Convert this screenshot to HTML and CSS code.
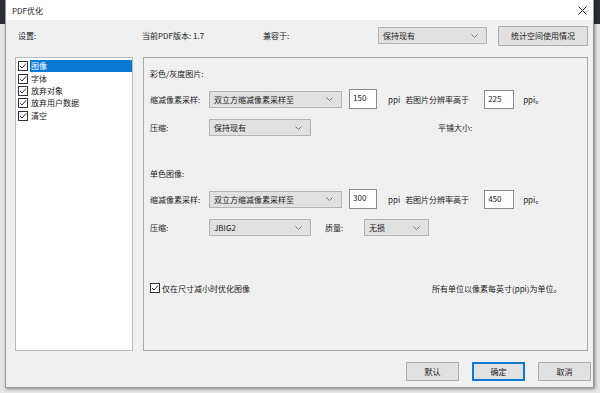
FILE: index.html
```html
<!DOCTYPE html>
<html lang="zh-CN">
<head>
  <meta charset="UTF-8">
  <meta name="viewport" content="width=device-width, initial-scale=1.0">
  <title>PDF优化</title>
  <link rel="stylesheet" href="styles.css">
</head>
<body>

  <div class="dialog">
    <div class="titlebar">
      <span class="title">PDF优化</span>
      <svg class="close" width="9" height="9" viewBox="0 0 9 9"><path d="M0.5 0.5 L8.5 8.5 M8.5 0.5 L0.5 8.5" stroke="#222" stroke-width="1" fill="none"/></svg>
    </div>

    <div class="content">
      <div class="header">
        <span class="h-settings">设置:</span>
        <span class="h-version">当前PDF版本: 1.7</span>
        <span class="h-compat">兼容于:</span>
        <div class="select sel-compat"><span>保持现有</span><svg class="chev" width="7" height="4" viewBox="0 0 7 4"><path d="M0.5 0.5 L3.5 3.5 L6.5 0.5" stroke="#777" fill="none"/></svg></div>
        <button class="btn btn-stats">统计空间使用情况</button>
      </div>

      <div class="main">
        <ul class="list">
          <li class="item selected"><span class="check"><svg width="10" height="10" viewBox="0 0 10 10"><rect x="0.5" y="0.5" width="9" height="9" fill="#fff" stroke="#333"/><path d="M2 5 L4 7 L8 2.5" stroke="#333" fill="none"/></svg></span><span class="label">图像</span></li>
          <li class="item"><span class="check"><svg width="10" height="10" viewBox="0 0 10 10"><rect x="0.5" y="0.5" width="9" height="9" fill="#fff" stroke="#333"/><path d="M2 5 L4 7 L8 2.5" stroke="#333" fill="none"/></svg></span><span class="label">字体</span></li>
          <li class="item"><span class="check"><svg width="10" height="10" viewBox="0 0 10 10"><rect x="0.5" y="0.5" width="9" height="9" fill="#fff" stroke="#333"/><path d="M2 5 L4 7 L8 2.5" stroke="#333" fill="none"/></svg></span><span class="label">放弃对象</span></li>
          <li class="item"><span class="check"><svg width="10" height="10" viewBox="0 0 10 10"><rect x="0.5" y="0.5" width="9" height="9" fill="#fff" stroke="#333"/><path d="M2 5 L4 7 L8 2.5" stroke="#333" fill="none"/></svg></span><span class="label">放弃用户数据</span></li>
          <li class="item"><span class="check"><svg width="10" height="10" viewBox="0 0 10 10"><rect x="0.5" y="0.5" width="9" height="9" fill="#fff" stroke="#333"/><path d="M2 5 L4 7 L8 2.5" stroke="#333" fill="none"/></svg></span><span class="label">清空</span></li>
        </ul>

        <div class="panel">
          <div class="section-title first">彩色/灰度图片:</div>
          <div class="row row-sample">
            <span class="field-label">缩减像素采样:</span>
            <div class="select sel-wide"><span>双立方缩减像素采样至</span><svg class="chev" width="7" height="4" viewBox="0 0 7 4"><path d="M0.5 0.5 L3.5 3.5 L6.5 0.5" stroke="#777" fill="none"/></svg></div>
            <div class="input in-ppi">150</div>
            <span class="ppi">ppi</span>
            <span class="above">若图片分辨率高于</span>
            <div class="input in-above">225</div>
            <span class="ppi-end">ppi。</span>
          </div>
          <div class="row row-comp">
            <span class="field-label">压缩:</span>
            <div class="select sel-mid"><span>保持现有</span><svg class="chev" width="7" height="4" viewBox="0 0 7 4"><path d="M0.5 0.5 L3.5 3.5 L6.5 0.5" stroke="#777" fill="none"/></svg></div>
            <span class="tile">平铺大小:</span>
          </div>

          <div class="section-title second">单色图像:</div>
          <div class="row row-sample">
            <span class="field-label">缩减像素采样:</span>
            <div class="select sel-wide"><span>双立方缩减像素采样至</span><svg class="chev" width="7" height="4" viewBox="0 0 7 4"><path d="M0.5 0.5 L3.5 3.5 L6.5 0.5" stroke="#777" fill="none"/></svg></div>
            <div class="input in-ppi">300</div>
            <span class="ppi">ppi</span>
            <span class="above">若图片分辨率高于</span>
            <div class="input in-above">450</div>
            <span class="ppi-end">ppi。</span>
          </div>
          <div class="row row-comp">
            <span class="field-label">压缩:</span>
            <div class="select sel-mid"><span>JBIG2</span><svg class="chev" width="7" height="4" viewBox="0 0 7 4"><path d="M0.5 0.5 L3.5 3.5 L6.5 0.5" stroke="#777" fill="none"/></svg></div>
            <span class="quality">质量:</span>
            <div class="select sel-small"><span>无损</span><svg class="chev" width="7" height="4" viewBox="0 0 7 4"><path d="M0.5 0.5 L3.5 3.5 L6.5 0.5" stroke="#777" fill="none"/></svg></div>
          </div>

          <div class="row row-foot">
            <span class="check"><svg width="10" height="10" viewBox="0 0 10 10"><rect x="0.5" y="0.5" width="9" height="9" fill="#fff" stroke="#333"/><path d="M2 5 L4 7 L8 2.5" stroke="#333" fill="none"/></svg></span>
            <span class="only">仅在尺寸减小时优化图像</span>
            <span class="units">所有单位以像素每英寸(ppi)为单位。</span>
          </div>
        </div>
      </div>

      <div class="footer">
        <button class="btn">默认</button>
        <button class="btn primary">确定</button>
        <button class="btn">取消</button>
      </div>
    </div>
  </div>

</body>
</html>
```

FILE: styles.css
```css
body {
  margin: 0;
  width: 600px;
  height: 393px;
  overflow: hidden;
  font-family: "Noto Sans CJK SC", "Noto Sans", sans-serif;
  font-size: 8px;
  color: #1b1b1b;
  background: linear-gradient(to bottom, #2b2e33 0, #2b2e33 24px, #e6e6e6 24px);
}
.dialog {
  margin-left: 5px;
  width: 589px;
  height: 388px;
  background: #f0f0f0;
  box-shadow: 1px 1px 3px rgba(0, 0, 0, 0.45);
  border: 1px solid #9a9a9a;
  border-top: none;
  box-sizing: border-box;
}
.titlebar {
  height: 20px;
  background: #fff;
  display: flex;
  align-items: center;
  justify-content: space-between;
  padding: 0 5px 0 6px;
}
.title {
  font-size: 8px;
  color: #222;
}
.close {
  margin-right: 1px;
}
.content {
  padding: 0 0 0 9px;
}
.header {
  height: 37px;
  display: flex;
  align-items: center;
  padding-bottom: 6px;
  box-sizing: border-box;
}
.h-settings { width: 127px; padding-left: 3px; box-sizing: border-box; }
.h-version { width: 121px; }
.h-compat { width: 115px; }
.select {
  height: 17px;
  box-sizing: border-box;
  background: #e1e1e1;
  border: 1px solid #b4b4b4;
  display: flex;
  align-items: center;
  justify-content: space-between;
  padding: 0 8px 0 4px;
}
.sel-compat { width: 109px; }
.btn {
  font-family: inherit;
  font-size: 8px;
  color: #1b1b1b;
  background: #e1e1e1;
  border: 1px solid #adadad;
  height: 19px;
  padding: 0;
}
.btn-stats {
  width: 90px;
  height: 20px;
  margin-left: 11px;
}
.main {
  display: flex;
  height: 294px;
}
.list {
  margin: 0;
  padding: 2px 0 0 0;
  list-style: none;
  width: 118px;
  box-sizing: border-box;
  background: #fff;
  border: 1px solid #b9bcc1;
}
.item {
  height: 12.4px;
  display: flex;
  align-items: center;
  padding-left: 2px;
}
.item .check { margin-right: 2px; }
.check {
  display: flex;
  width: 10px;
  height: 10px;
}
.item .label {
  flex: 1;
  height: 12px;
  line-height: 12px;
  padding-left: 1px;
}
.item.selected .label {
  background: #0a78d4;
  color: #fff;
}
.panel {
  margin-left: 10px;
  width: 445px;
  box-sizing: border-box;
  border: 1px solid #a8a8a8;
  padding-left: 6px;
}
.section-title {
  height: 12px;
  line-height: 12px;
}
.section-title.first { margin-top: 10px; }
.section-title.second { margin-top: 32px; }
.row {
  display: flex;
  align-items: center;
}
.row-sample {
  margin-top: 9px;
  height: 20px;
}
.row-comp {
  margin-top: 10px;
  height: 17px;
}
.field-label { width: 59px; }
.sel-wide { width: 133px; }
.sel-mid { width: 102px; }
.sel-small { width: 65px; }
.input {
  background: #fff;
  border: 1px solid #8a8a8a;
  height: 19px;
  box-sizing: border-box;
  line-height: 16px;
  padding-left: 3px;
}
.in-ppi { width: 28px; margin-left: 7px; height: 20px; }
.ppi { margin-left: 11px; }
.above { margin-left: 5px; width: 79px; }
.in-above { width: 30px; }
.ppi-end { margin-left: 9px; }
.tile { margin-left: 127px; }
.quality { margin-left: 14px; width: 39px; }
.row-foot {
  margin-top: 46px;
  height: 12px;
}
.row-foot .check { margin-right: 2px; }
.only { width: 259px; }
.units { margin-left: 11px; }
.footer {
  display: flex;
  gap: 13px;
  padding-left: 391px;
  margin-top: 11px;
}
.footer .btn {
  width: 53px;
  height: 19px;
}
.footer .primary {
  border: 2px solid #0a78d4;
}
```
